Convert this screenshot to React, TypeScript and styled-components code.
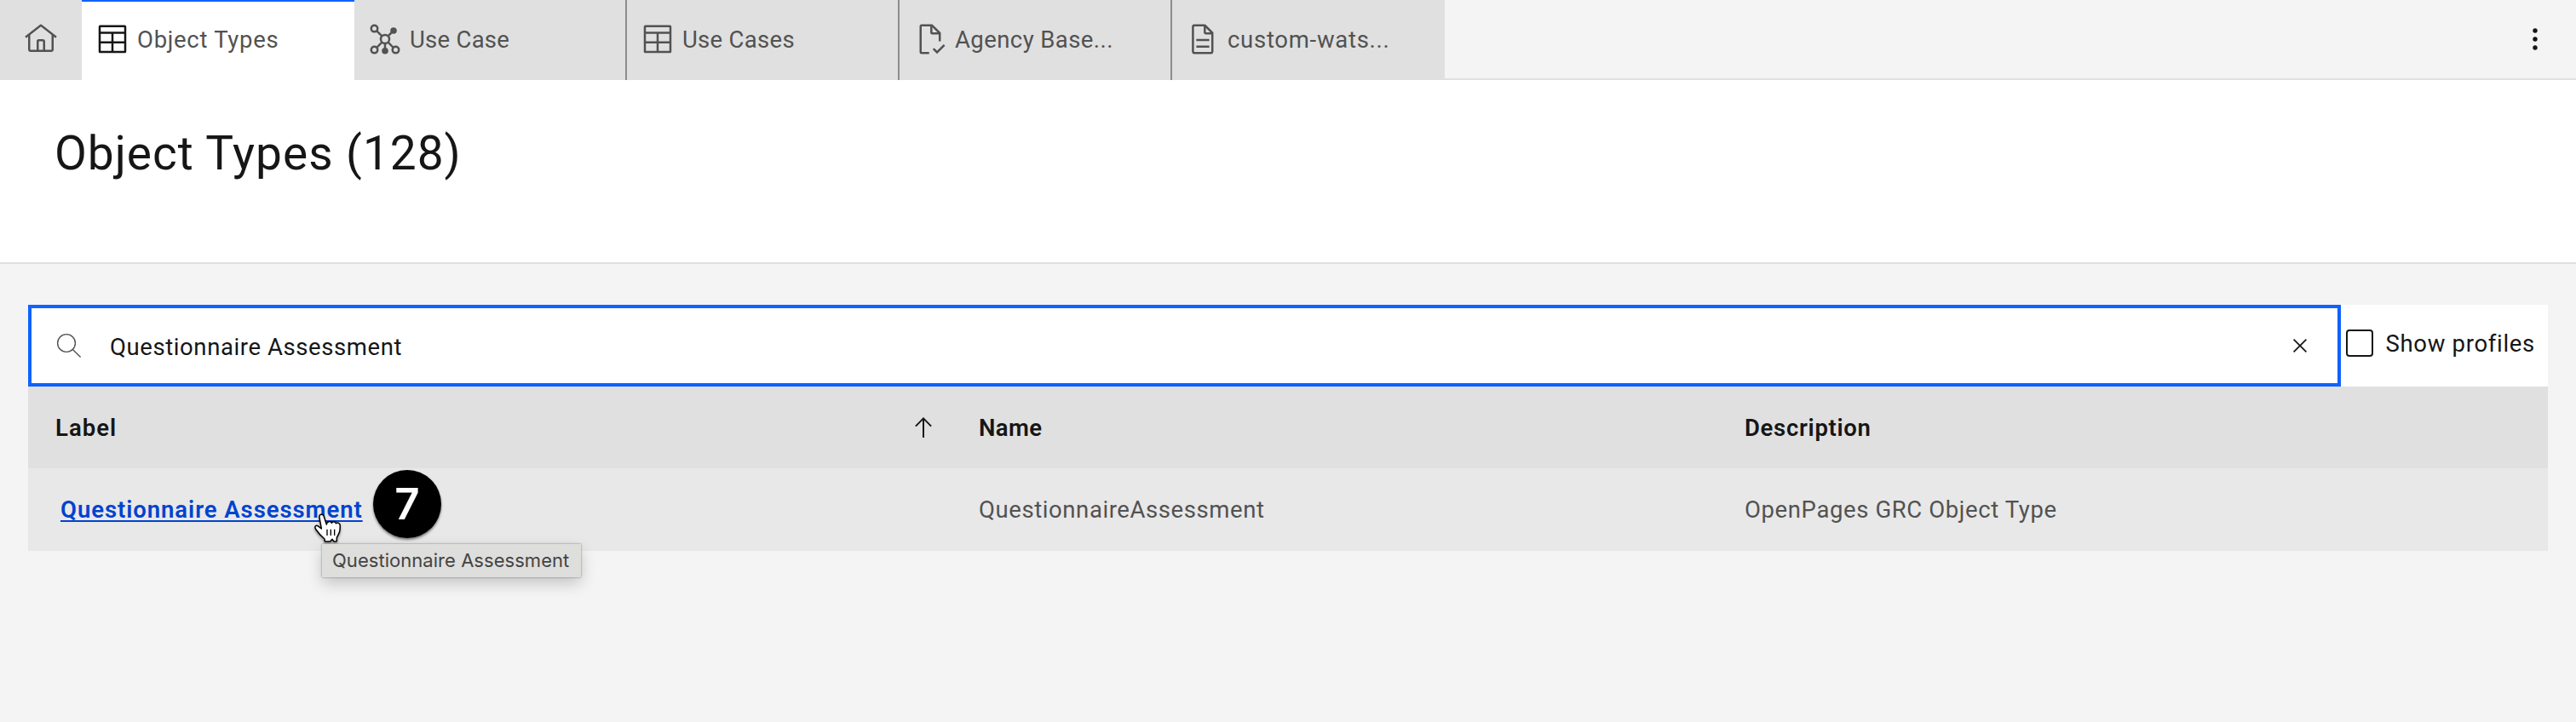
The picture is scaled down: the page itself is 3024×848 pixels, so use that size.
import React from 'react';
import styled, { createGlobalStyle } from 'styled-components';

const Global = createGlobalStyle`
  * { box-sizing: border-box; }
  body {
    margin: 0;
    background: #f4f4f4;
    color: #161616;
    font-family: Roboto, "Liberation Sans", sans-serif;
    font-size: 27.5px;
  }
  svg { display: block; flex: none; }
`;

const Page = styled.div`
  min-height: 848px;
  background: #f4f4f4;
`;

const TabBar = styled.nav`
  display: flex;
  height: 94px;
  background: linear-gradient(#f4f4f4 92px, #e0e0e0 92px);
`;

const HomeTab = styled.div`
  display: flex;
  align-items: center;
  justify-content: center;
  width: 96px;
  padding-bottom: 2px;
  background: #e0e0e0;
  color: #525252;
`;

const Tab = styled.div<{ $active?: boolean; $divider?: boolean }>`
  display: flex;
  align-items: center;
  gap: 9px;
  width: 320px;
  padding: 0 14px 2px 16px;
  color: #525252;
  background: ${(p) => (p.$active ? '#ffffff' : '#e0e0e0')};
  box-shadow: ${(p) =>
    p.$active ? 'inset 0 2px 0 #0f62fe' : p.$divider ? 'inset -2px 0 0 #8d8d8d' : 'none'};
  svg { color: ${(p) => (p.$active ? '#161616' : '#525252')}; }
`;

const Text = styled.span<{ $spacing: number }>`
  letter-spacing: ${(p) => p.$spacing}px;
  white-space: nowrap;
`;

const Overflow = styled.div`
  display: flex;
  align-items: center;
  margin-left: auto;
  padding: 0 32px 2px 0;
`;

const PageHeader = styled.header`
  height: 216px;
  padding: 48px 64px 0;
  background: #ffffff;
  border-bottom: 2px solid #e0e0e0;
`;

const Title = styled.h1`
  margin: 0;
  font-size: 55px;
  line-height: 76px;
  font-weight: 400;
  letter-spacing: 0.98px;
`;

const Content = styled.main`
  padding: 48px 33px 0;
`;

const Toolbar = styled.div`
  display: flex;
  height: 96px;
  background: #ffffff;
`;

const SearchBox = styled.div`
  display: flex;
  align-items: center;
  width: 2715px;
  padding: 0 28px;
  border: 4px solid #0f62fe;
`;

const SearchInput = styled.input`
  flex: 1;
  margin: 0 0 0 32px;
  padding: 2px 0 0;
  border: 0;
  outline: 0;
  background: transparent;
  color: #161616;
  font: inherit;
  letter-spacing: 0.592px;
`;

const CheckLabel = styled.label`
  display: flex;
  align-items: center;
  gap: 14.5px;
  margin-left: 6px;
  padding-bottom: 6px;
`;

const CheckBox = styled.span`
  width: 32px;
  height: 32px;
  border: 2px solid #161616;
  border-radius: 4px;
`;

const Row = styled.div<{ $head?: boolean }>`
  position: relative;
  display: grid;
  grid-template-columns: 1084px 899px 1fr;
  height: ${(p) => (p.$head ? 96 : 97)}px;
  background: ${(p) => (p.$head ? '#e0e0e0' : '#e8e8e8')};
  color: ${(p) => (p.$head ? '#161616' : '#525252')};
  font-weight: ${(p) => (p.$head ? 600 : 400)};
`;

const Cell = styled.div`
  display: flex;
  align-items: center;
  justify-content: space-between;
  padding: 0 17px 0 32px;
`;

const Link = styled.a`
  margin-left: 6px;
  color: #0043ce;
  font-weight: 600;
  letter-spacing: 0.94px;
  text-decoration: underline;
  text-decoration-thickness: 2px;
  text-underline-offset: 3px;
`;

const StepBadge = styled.div`
  position: absolute;
  left: 405px;
  top: 2px;
  width: 80px;
  height: 80px;
  border-radius: 50%;
  background: #000000;
  color: #ffffff;
  font: 600 51px/80px Inter, sans-serif;
  text-align: center;
  box-shadow: 0 2px 3px rgba(0, 0, 0, 0.5);
`;

const Tooltip = styled.div`
  position: absolute;
  left: 345px;
  top: 89px;
  width: 304px;
  height: 39px;
  padding-left: 12px;
  background: #dededc;
  color: #444444;
  font: 400 22px/39px Inter, sans-serif;
  letter-spacing: 0.04px;
  white-space: nowrap;
  box-shadow: 0 0 2px rgba(0, 0, 0, 0.45), 0 7px 18px rgba(0, 0, 0, 0.2);
`;

const Pointer = styled.svg`
  position: absolute;
  left: 333px;
  top: 51px;
  filter: drop-shadow(0 2px 1.5px rgba(0, 0, 0, 0.4));
`;

const HomeIcon = () => (
  <svg width="40" height="40" viewBox="0 0 32 32" fill="currentColor">
    <path d="M16.6123,2.2138a1.01,1.01,0,0,0-1.2427,0L1,13.4194l1.2427,1.5717L4,13.6208V26a2.0041,2.0041,0,0,0,2,2H26a2.0037,2.0037,0,0,0,2-2V13.63L29.7573,15,31,13.4282ZM18,26H14V18h4Zm2,0V18a2.0023,2.0023,0,0,0-2-2H14a2.002,2.002,0,0,0-2,2v8H6V12.0615l10-7.79,10,7.8005V26Z" />
  </svg>
);

const Outline = ({ children }: { children: React.ReactNode }) => (
  <svg width="40" height="40" viewBox="0 0 40 40" fill="none" stroke="currentColor" strokeWidth="2.5">
    {children}
  </svg>
);

const TableIcon = () => (
  <Outline>
    <rect x="5" y="4.8" width="30" height="30.2" rx="0.6" />
    <path d="M5 12.4H35M5 23.7H35M20 12.4V35" />
  </Outline>
);

const NetworkIcon = () => (
  <Outline>
    <path d="M10 10.2L16.4 16.4M27.5 12.3L23.6 16.4M16.4 23.6L10.2 30M23.6 23.6L29.8 30M20 25V32" />
    <circle cx="7.5" cy="7.6" r="3.75" />
    <circle cx="20" cy="20" r="5" />
    <circle cx="7.5" cy="32.6" r="3.75" />
    <circle cx="32.5" cy="32.6" r="3.75" />
    <circle cx="30" cy="10" r="3.8" fill="currentColor" stroke="none" />
    <circle cx="20" cy="33.8" r="3.8" fill="currentColor" stroke="none" />
  </Outline>
);

const DocumentCheckIcon = () => (
  <Outline>
    <path d="M18.7 36.2H10a1.25 1.25 0 0 1-1.25-1.25V5A1.25 1.25 0 0 1 10 3.75H22L31.2 12.8V22.5" />
    <path d="M21.3 3.75V12a1.25 1.25 0 0 0 1.25 1.25H31.2" />
    <path d="M23.7 31.2L28 35.5L36.6 26.9" />
  </Outline>
);

const DocumentIcon = () => (
  <Outline>
    <path d="M22 3.75H10A1.7 1.7 0 0 0 8.4 5.4V34.6A1.7 1.7 0 0 0 10 36.2H29.6a1.7 1.7 0 0 0 1.6-1.6V12.6L22.6 4a1.2 1.2 0 0 0-.6-.25Z" />
    <path d="M22.3 3.75V11.8a1.5 1.5 0 0 0 1.5 1.5H31.2M12.4 21.1H27.6M12.4 28.7H27.6" />
  </Outline>
);

const OverflowIcon = () => (
  <svg width="32" height="32" viewBox="0 0 32 32" fill="#161616">
    <circle cx="16" cy="6" r="2.7" />
    <circle cx="16" cy="16" r="2.7" />
    <circle cx="16" cy="26" r="2.7" />
  </svg>
);

const SearchIcon = () => (
  <svg width="32" height="32" viewBox="0 0 32 32" fill="none" stroke="#525252" strokeWidth="1.4">
    <circle cx="13" cy="13" r="10.4" />
    <path d="M20.4 20.4L29.6 29.5" />
  </svg>
);

const CloseIcon = () => (
  <svg width="32" height="32" viewBox="0 0 32 32" fill="none" stroke="#161616" strokeWidth="1.7">
    <path d="M8.6 8.6L23.4 23.4M23.4 8.6L8.6 23.4" />
  </svg>
);

const SortIcon = () => (
  <svg width="32" height="32" viewBox="0 0 32 32" fill="none" stroke="#161616" strokeWidth="2">
    <path d="M16 28V5.4M6.9 14.6L16 5.4L25.1 14.6" />
  </svg>
);

const HandCursor = () => (
  <Pointer width="37" height="39" viewBox="78 212 111 117">
    <path
      d="M105 233C102 221 117 217 121 229L130 257C131 245 145 244 148 252C152 245 161 246 163 253C169 248 178 253 178 262L177 277C176 289 169 296 166 304V316L156 317L150 309L143 317H124L123 308C112 299 101 287 93 275C85 264 93 257 102 264L112 272Z"
      fill="#ffffff"
      stroke="#000000"
      strokeWidth="4.5"
      strokeLinejoin="round"
    />
    <path d="M132 274V296M145 274V296M158 274V296" fill="none" stroke="#000000" strokeWidth="4" />
  </Pointer>
);

export default function App() {
  return (
    <Page>
      <Global />
      <TabBar>
        <HomeTab><HomeIcon /></HomeTab>
        <Tab $active><TableIcon /><Text $spacing={0.708}>Object Types</Text></Tab>
        <Tab $divider><NetworkIcon /><Text $spacing={0.26}>Use Case</Text></Tab>
        <Tab $divider><TableIcon /><Text $spacing={0.292}>Use Cases</Text></Tab>
        <Tab $divider><DocumentCheckIcon /><Text $spacing={0.419}>Agency Base...</Text></Tab>
        <Tab><DocumentIcon /><Text $spacing={0.72}>custom-wats...</Text></Tab>
        <Overflow><OverflowIcon /></Overflow>
      </TabBar>
      <PageHeader>
        <Title>Object Types (128)</Title>
      </PageHeader>
      <Content>
        <Toolbar>
          <SearchBox>
            <SearchIcon />
            <SearchInput defaultValue="Questionnaire Assessment" />
            <CloseIcon />
          </SearchBox>
          <CheckLabel>
            <CheckBox />
            <Text $spacing={0.689}>Show profiles</Text>
          </CheckLabel>
        </Toolbar>
        <Row $head>
          <Cell><Text $spacing={1.025}>Label</Text><SortIcon /></Cell>
          <Cell><Text $spacing={0.395}>Name</Text></Cell>
          <Cell><Text $spacing={0.696}>Description</Text></Cell>
        </Row>
        <Row>
          <Cell><Link>Questionnaire Assessment</Link></Cell>
          <Cell><Text $spacing={0.588}>QuestionnaireAssessment</Text></Cell>
          <Cell><Text $spacing={0.61}>OpenPages GRC Object Type</Text></Cell>
          <StepBadge>7</StepBadge>
          <HandCursor />
          <Tooltip>Questionnaire Assessment</Tooltip>
        </Row>
      </Content>
    </Page>
  );
}
